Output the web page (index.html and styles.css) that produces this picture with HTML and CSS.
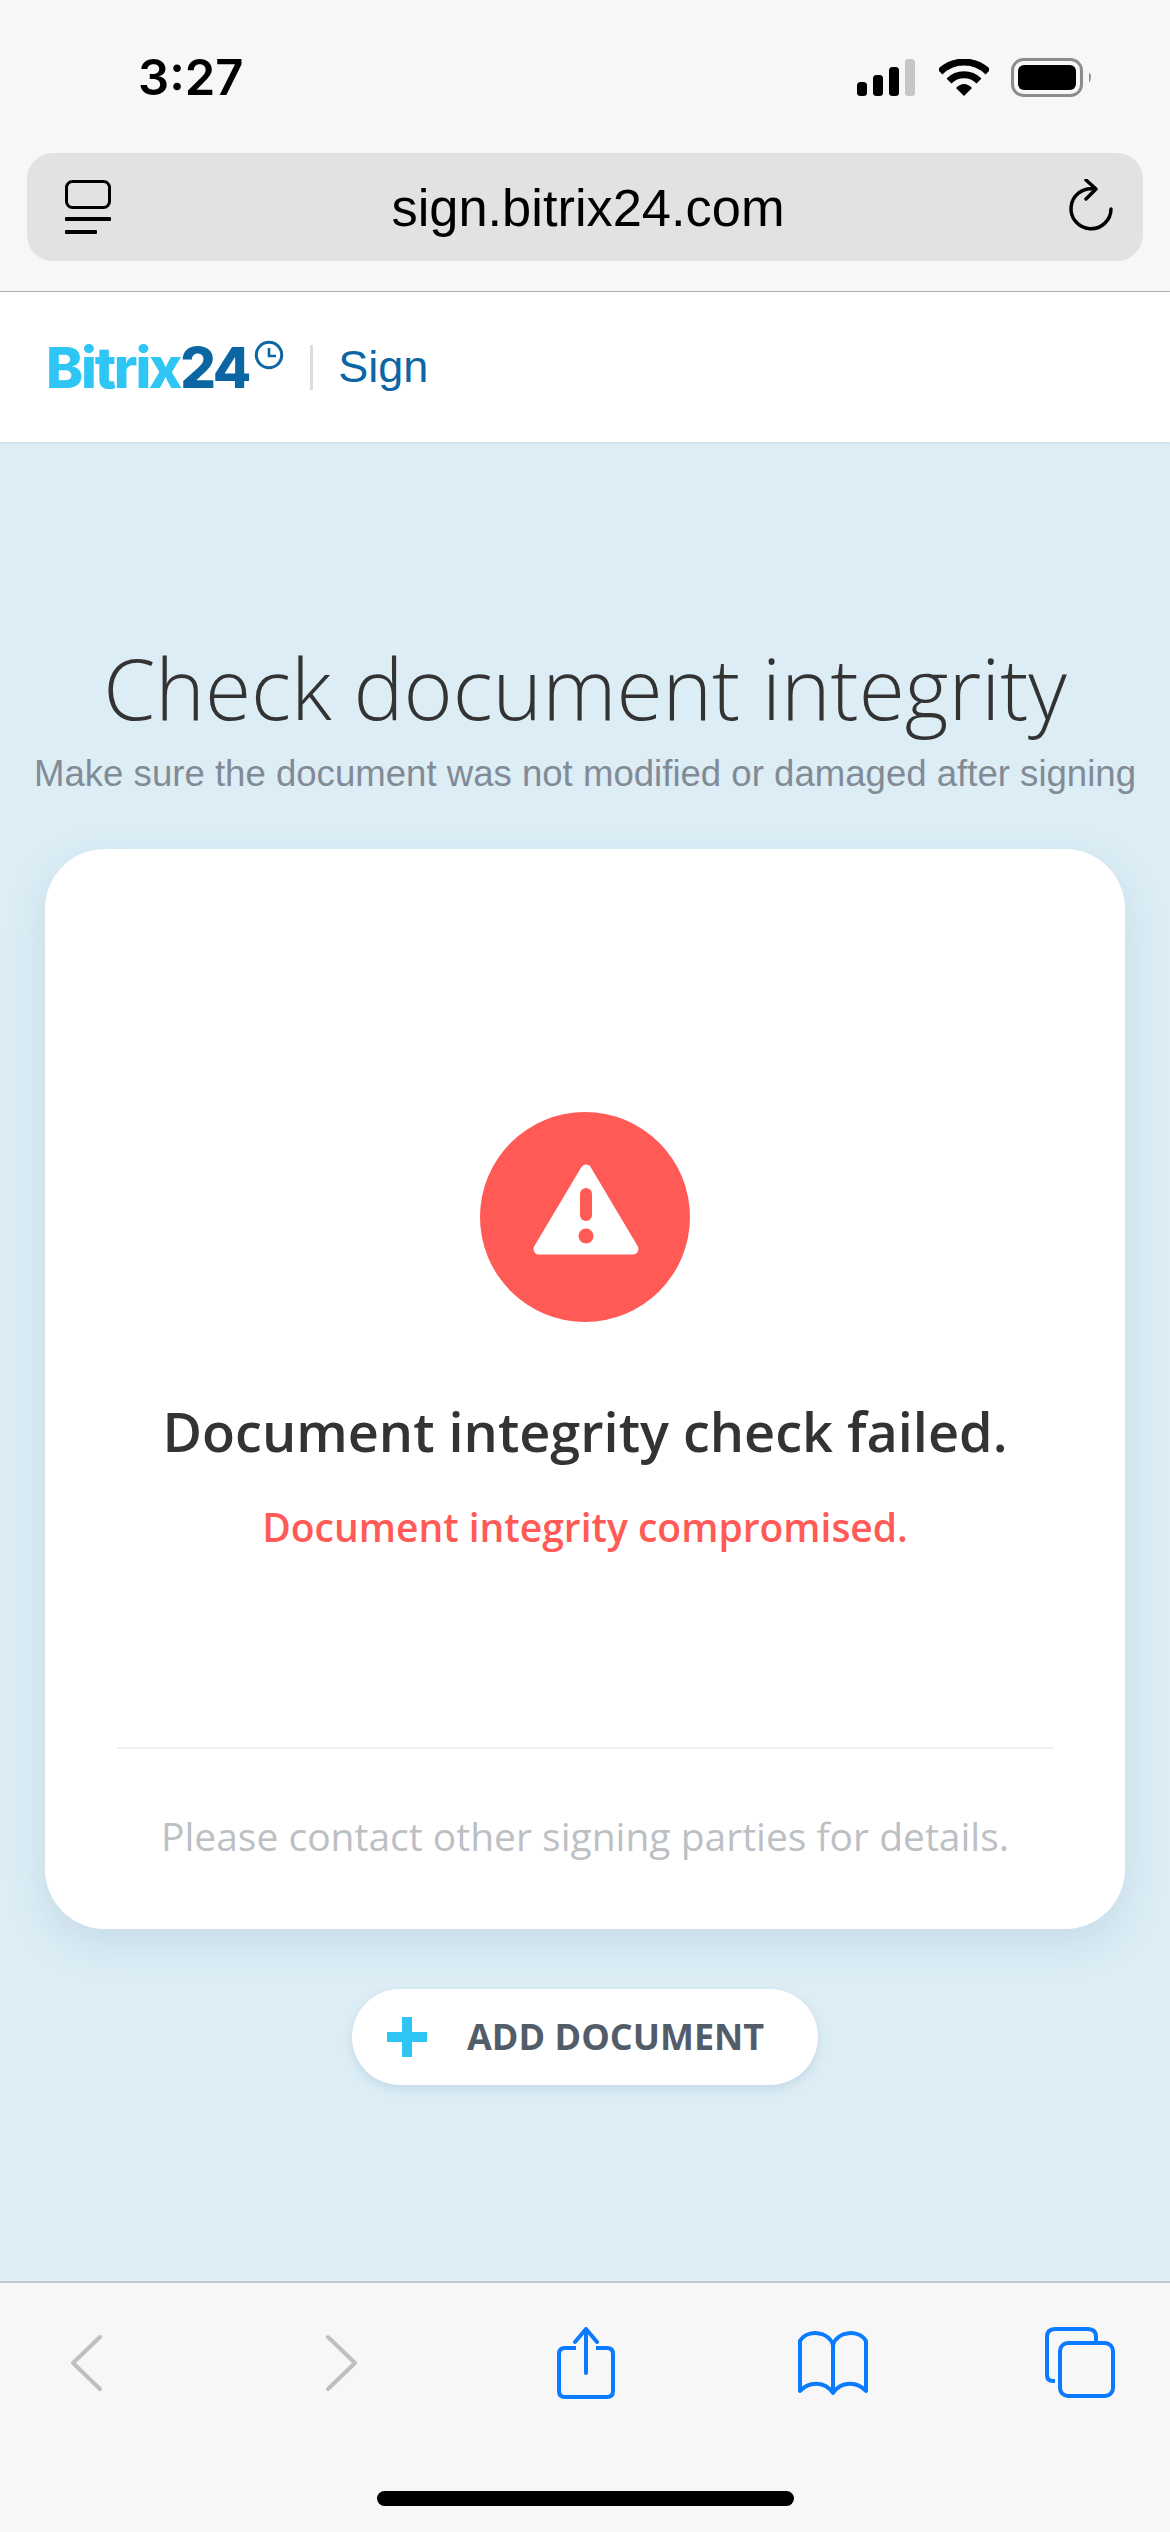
FILE: index.html
```html
<!DOCTYPE html>
<html lang="en">
<head>
    <meta charset="UTF-8">
    <meta name="viewport" content="width=device-width, initial-scale=1.0">
    <title>Check document integrity</title>
    <link rel="stylesheet" href="styles.css">
</head>
<body>
    <div class="phone">
        <!-- browser top -->
        <div class="browser-top">
            <div class="status-bar">
                <span class="time">3:27</span>
                <div class="status-icons">
                    <svg class="signal" width="60" height="38" viewBox="0 0 60 38">
                        <rect x="0" y="23" width="10" height="14" rx="3.5" fill="#000"/>
                        <rect x="16" y="16" width="10" height="21" rx="3.5" fill="#000"/>
                        <rect x="32" y="8" width="10" height="29" rx="3.5" fill="#000"/>
                        <rect x="48" y="0" width="10" height="37" rx="3.5" fill="#c6c6c6"/>
                    </svg>
                    <svg class="wifi" width="50" height="38" viewBox="0 0 50 38">
                        <path d="M1 13 A34 34 0 0 1 49 13" fill="none" stroke="#000" stroke-width="7"/>
                        <path d="M10 22 A21 21 0 0 1 40 22" fill="none" stroke="#000" stroke-width="7"/>
                        <path d="M17 29 Q25 21 33 29 L25 37 Z" fill="#000"/>
                    </svg>
                    <svg class="battery" width="84" height="40" viewBox="0 0 84 40">
                        <rect x="1.5" y="1.5" width="69" height="36" rx="11" fill="none" stroke="#8c8c8c" stroke-width="3"/>
                        <rect x="7" y="7" width="58" height="25" rx="6" fill="#000"/>
                        <path d="M78 14 Q82 19 78 25 Z" fill="#8c8c8c"/>
                    </svg>
                </div>
            </div>
            <div class="url-bar">
                <svg width="46" height="54" viewBox="0 0 46 54">
                    <rect x="1.5" y="1.5" width="43" height="26" rx="6" fill="none" stroke="#000" stroke-width="3"/>
                    <rect x="0" y="37" width="46" height="4" rx="1" fill="#000"/>
                    <rect x="0" y="50" width="32" height="4" rx="1" fill="#000"/>
                </svg>
                <span class="url">sign.bitrix24.com</span>
                <svg width="46" height="56" viewBox="0 0 46 56">
                    <path d="M26 10 A20 20 0 1 0 43 30" fill="none" stroke="#000" stroke-width="3.5" stroke-linecap="round"/>
                    <path d="M18 1 L28 10 L18 20" fill="none" stroke="#000" stroke-width="3.5" stroke-linecap="round" stroke-linejoin="round"/>
                </svg>
            </div>
        </div>

        <!-- site header -->
        <header class="site-header">
            <div class="logo">
                <span class="logo-text"><span class="logo-light">Bitrix</span><span class="logo-dark">24</span></span>
                <svg class="logo-clock" width="30" height="30" viewBox="0 0 30 30">
                    <circle cx="15" cy="15" r="12.7" fill="none" stroke="#0b66a3" stroke-width="3"/>
                    <path d="M15 8 V16 H22" fill="none" stroke="#0b66a3" stroke-width="2.6"/>
                </svg>
            </div>
            <span class="logo-sep"></span>
            <span class="logo-sign">Sign</span>
        </header>

        <main class="content">
            <h1 class="title">Check document integrity</h1>
            <p class="subtitle">Make sure the document was not modified or damaged after signing</p>

            <section class="card">
                <div class="card-main">
                    <svg class="alert-icon" width="210" height="210" viewBox="0 0 210 210">
                        <circle cx="105" cy="105" r="105" fill="#ff5a55"/>
                        <path d="M106 58 L153 137 H59 Z" fill="#fff" stroke="#fff" stroke-width="11" stroke-linejoin="round"/>
                        <rect x="100" y="76" width="12" height="33" rx="6" fill="#ff5a55"/>
                        <circle cx="106" cy="124" r="7.5" fill="#ff5a55"/>
                    </svg>
                    <h2 class="result-title">Document integrity check failed.</h2>
                    <p class="result-msg">Document integrity compromised.</p>
                </div>
                <p class="card-note">Please contact other signing parties for details.</p>
            </section>

            <button class="add-btn">
                <svg width="40" height="40" viewBox="0 0 40 40">
                    <path d="M15 0 H25 V15 H40 V25 H25 V40 H15 V25 H0 V15 H15 Z" fill="#2fc6f6"/>
                </svg>
                <span class="add-label">ADD DOCUMENT</span>
            </button>
        </main>

        <!-- browser bottom -->
        <div class="browser-bottom">
            <div class="toolbar">
                <svg width="80" height="72" viewBox="0 0 80 72">
                    <path d="M54 10 L27 36 L54 62" fill="none" stroke="#bfbfbf" stroke-width="4" stroke-linecap="round" stroke-linejoin="round"/>
                </svg>
                <svg width="80" height="72" viewBox="0 0 80 72">
                    <path d="M33 10 L60 36 L33 62" fill="none" stroke="#bfbfbf" stroke-width="4" stroke-linecap="round" stroke-linejoin="round"/>
                </svg>
                <svg width="80" height="72" viewBox="0 0 80 72">
                    <path d="M33 21 H22 Q16 21 16 27 V64 Q16 70 22 70 H64 Q70 70 70 64 V27 Q70 21 64 21 H53" fill="none" stroke="#0a7aff" stroke-width="4"/>
                    <path d="M43 46 V3 M32 15 L43 2 L54 15" fill="none" stroke="#0a7aff" stroke-width="4" stroke-linecap="round" stroke-linejoin="round"/>
                </svg>
                <svg width="80" height="72" viewBox="0 0 80 72">
                    <path d="M41 18 C37 4 15 2 8 14 V64 C17 54 33 54 41 66 C49 54 65 54 74 64 V14 C67 2 45 4 41 18 V66" fill="none" stroke="#0a7aff" stroke-width="4" stroke-linejoin="round"/>
                </svg>
                <svg width="80" height="72" viewBox="0 0 80 72">
                    <path d="M15 54 H13 Q7 54 7 48 V10 Q7 2 15 2 H48 Q56 2 56 10 V14" fill="none" stroke="#0a7aff" stroke-width="4"/>
                    <rect x="20" y="16" width="53" height="53" rx="8" fill="none" stroke="#0a7aff" stroke-width="4"/>
                </svg>
            </div>
            <div class="home-indicator"></div>
        </div>
    </div>
</body>
</html>
```

FILE: styles.css
```css
* {
    box-sizing: border-box;
}

body {
    margin: 0;
    font-family: "Open Sans", sans-serif;
}

.phone {
    display: flex;
    flex-direction: column;
    width: 1170px;
    height: 2532px;
    overflow: hidden;
    background-color: #dcedf5;
}

/* browser top */
.browser-top {
    height: 292px;
    padding: 0 27px;
    background-color: #f7f7f7;
    border-bottom: 1px solid #b4b4b4;
}

.status-bar {
    display: flex;
    justify-content: space-between;
    align-items: center;
    height: 153px;
    padding: 2px 48px 0 111px;
}

.time {
    font-family: Inter, "Liberation Sans", sans-serif;
    font-size: 49px;
    font-weight: 600;
    color: #000;
}

.status-icons {
    display: flex;
    align-items: center;
    gap: 22px;
}

.url-bar {
    display: flex;
    justify-content: space-between;
    align-items: center;
    height: 108px;
    padding: 0 29px 0 38px;
    background-color: #e2e2e2;
    border-radius: 26px;
}

.url {
    padding: 2px 3px 0 0;
    font-family: "Liberation Sans", Arial, sans-serif;
    font-size: 52.4px;
    color: #000;
}

/* site header */
.site-header {
    display: flex;
    align-items: center;
    height: 150px;
    padding-left: 46px;
    background-color: #fff;
    box-shadow: 0 1px 3px rgba(0, 0, 0, 0.08);
}

.logo {
    display: flex;
    align-items: flex-start;
}

.logo-text {
    padding-top: 2px;
    font-family: Inter, sans-serif;
    font-size: 56px;
    font-weight: 800;
    letter-spacing: -2.2px;
    line-height: 58px;
}

.logo-light {
    color: #2fc6f6;
}

.logo-dark {
    color: #0b66a3;
}

.logo-clock {
    margin: 3px 0 0 5px;
}

.logo-sep {
    width: 3px;
    height: 45px;
    margin: 0 25px 0 26px;
    background-color: #dcdcdc;
}

.logo-sign {
    font-family: "Liberation Sans", Arial, sans-serif;
    font-size: 45px;
    color: #0b66a3;
}

/* content */
.content {
    flex: 1;
    display: flex;
    flex-direction: column;
    align-items: center;
    padding-top: 186px;
}

.title {
    margin: 0;
    font-size: 84px;
    font-weight: 300;
    line-height: 120px;
    color: #333;
}

.subtitle {
    margin: 3px 0 0;
    font-family: "Liberation Sans", Arial, sans-serif;
    font-size: 36.6px;
    line-height: 46px;
    color: #828b95;
}

.card {
    width: 1080px;
    height: 1080px;
    margin-top: 52px;
    padding: 0 72px;
    background-color: #fff;
    border-radius: 60px;
    box-shadow: 0 14px 40px rgba(90, 130, 160, 0.16);
}

.card-main {
    display: flex;
    flex-direction: column;
    align-items: center;
    height: 900px;
    padding-top: 263px;
    border-bottom: 2px solid #edeff0;
}

.result-title {
    margin: 72px 0 0;
    font-size: 54px;
    font-weight: 600;
    line-height: 74px;
    color: #333;
}

.result-msg {
    margin: 33px 0 0;
    font-size: 39px;
    font-weight: 600;
    line-height: 52px;
    color: #ff5a55;
}

.card-note {
    margin: 61px 0 0;
    font-size: 39px;
    line-height: 52px;
    text-align: center;
    color: #bcc0c4;
}

.add-btn {
    display: flex;
    align-items: center;
    gap: 40px;
    width: 466px;
    height: 96px;
    margin-top: 60px;
    padding: 0 0 0 35px;
    border: 0;
    border-radius: 48px;
    background-color: #fff;
    box-shadow: 0 4px 10px rgba(90, 130, 160, 0.18);
    font-family: "Open Sans", sans-serif;
    font-size: 36px;
    font-weight: 700;
    color: #535c69;
}

.add-label {
    padding-bottom: 2px;
}

/* browser bottom */
.browser-bottom {
    height: 251px;
    background-color: #f7f7f7;
    border-top: 2px solid #c3c8cb;
}

.toolbar {
    display: flex;
    justify-content: space-between;
    padding: 44px 50px 0 46px;
}

.home-indicator {
    width: 417px;
    height: 15px;
    margin: 92px auto 0;
    border-radius: 8px;
    background-color: #000;
}
```
